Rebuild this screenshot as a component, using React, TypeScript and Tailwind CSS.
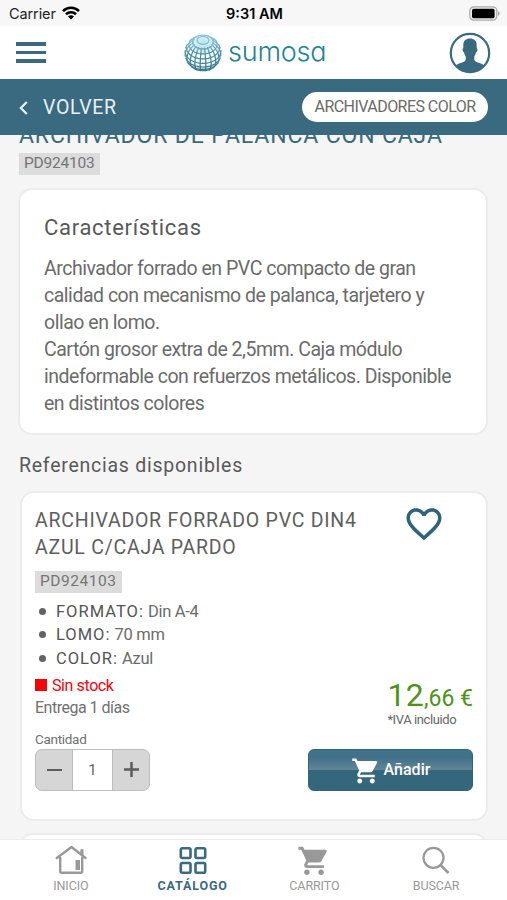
import type { ReactNode } from "react";
import { MdFavoriteBorder, MdShoppingCart } from "react-icons/md";

type NavItemProps = {
  active?: boolean;
  children: ReactNode;
  label: string;
};

const specs = [
  { name: "FORMATO:", value: "Din A-4" },
  { name: "LOMO:", value: "70 mm" },
  { name: "COLOR:", value: "Azul" },
];

const RADIUS = 18;
const TILT = (42 * Math.PI) / 180;

// Orthographic projection of a point on the tilted globe
function project(lat: number, lon: number) {
  const x = Math.cos(lat) * Math.sin(lon);
  const y = Math.sin(lat);
  const z = Math.cos(lat) * Math.cos(lon);

  return {
    x: 19 + RADIUS * x,
    y: 19 - RADIUS * (y * Math.cos(TILT) - z * Math.sin(TILT)),
    visible: y * Math.sin(TILT) + z * Math.cos(TILT) > 0,
  };
}

function linePath(points: { x: number; y: number; visible: boolean }[]) {
  let drawing = false;

  return points
    .map((point) => {
      if (!point.visible) {
        drawing = false;
        return "";
      }
      const command = drawing ? "L" : "M";
      drawing = true;
      return `${command}${point.x.toFixed(2)} ${point.y.toFixed(2)}`;
    })
    .join("");
}

const steps = Array.from({ length: 61 }, (_, i) => i / 60);
const parallels = [-38, -24, -9, 7, 23, 39, 55, 71].map((deg) =>
  linePath(steps.map((t) => project((deg * Math.PI) / 180, t * 2 * Math.PI - Math.PI))),
);
const meridians = Array.from({ length: 20 }, (_, i) => ((i + 0.5) * 2 * Math.PI) / 20).map((lon) =>
  linePath(steps.map((t) => project(-Math.PI / 2 + t * 2.6, lon))),
);

function Globe() {
  return (
    <svg className="h-[38px] w-[38px]" viewBox="0 0 38 38" fill="none">
      <defs>
        <linearGradient id="globe-line" x1="0" y1="0" x2="0" y2="38" gradientUnits="userSpaceOnUse">
          <stop offset="0" stopColor="#8cc9dc" />
          <stop offset="0.3" stopColor="#74b3c6" />
          <stop offset="0.5" stopColor="#4a8ea2" />
          <stop offset="1" stopColor="#2c7485" />
        </linearGradient>
        <radialGradient id="globe-fill" cx="0.5" cy="0.25" r="0.78">
          <stop offset="0" stopColor="#b9e4f1" />
          <stop offset="0.3" stopColor="#d5eef6" />
          <stop offset="0.45" stopColor="#fbfdfe" />
          <stop offset="0.75" stopColor="#f4fafb" />
          <stop offset="1" stopColor="#8fbfca" />
        </radialGradient>
      </defs>
      <circle cx="19" cy="19" r="18" fill="url(#globe-fill)" />
      <g stroke="url(#globe-line)" strokeWidth="1.2">
        {[...parallels, ...meridians].map((d, i) => (
          <path d={d} key={i} />
        ))}
      </g>
    </svg>
  );
}

function StatusBar() {
  return (
    <div className="grid h-[26px] shrink-0 grid-cols-3 items-center bg-[#f7f7f7] pt-px pr-[7px] pl-[9px] font-['Inter',sans-serif] text-black">
      <div className="flex items-center gap-[6px]">
        <span className="text-[14.5px] tracking-[-0.1px] text-[#222]">Carrier</span>
        <svg className="mb-px h-[14px] w-[18px]" viewBox="0 0 18 14" fill="none" stroke="#000" strokeWidth="2.6">
          <path d="M1 5.1a11.4 11.4 0 0 1 16 0" />
          <path d="M4 8.3a7.2 7.2 0 0 1 10 0" />
          <path d="M9 13.6 6 10.6a4.3 4.3 0 0 1 6 0Z" fill="#000" stroke="none" />
        </svg>
      </div>
      <span className="text-center text-[14.5px] font-semibold">9:31 AM</span>
      <svg className="mb-px h-[15px] w-[31px] justify-self-end" viewBox="0 0 31 15">
        <rect x="0.8" y="0.8" width="27" height="13.4" rx="4" fill="#eee" stroke="#aaa" strokeWidth="1.2" />
        <rect x="3" y="2.8" width="22.6" height="9.4" rx="1.8" />
        <path d="M29 5v5q1.6-.8 1.6-2.5T29 5Z" fill="#aaa" />
      </svg>
    </div>
  );
}

function Header() {
  return (
    <header className="flex h-[53px] shrink-0 items-center justify-between bg-white px-[16px]">
      <button aria-label="Menú" className="flex w-[30px] flex-col gap-[5px]" type="button">
        <span className="h-[3.4px] bg-[#3a6a80]" />
        <span className="h-[3.4px] bg-[#3a6a80]" />
        <span className="h-[3.4px] bg-[#3a6a80]" />
      </button>
      <div className="ml-[15px] flex items-center gap-[6px]">
        <Globe />
        <span className="w-[98px] pb-[2px] font-['Inter',sans-serif] text-[27px] leading-none font-light tracking-[-0.2px] text-[#1f8495] [font-feature-settings:'cv11']">
          sumosa
        </span>
      </div>
      <svg className="h-[42px] w-[42px]" viewBox="0 0 42 42">
        <circle cx="21" cy="21" r="19.2" fill="#fff" stroke="#3a6a80" strokeWidth="2.2" />
        <path
          d="M21 6.600c4.200 0 6.700 2.300 6.700 6.600v3c.8.100.9 1 .6 2.200-.3 1.200-.7 1.800-1.300 1.900-.4 2.100-1.100 3.300-1.700 4.200v3.200c.6 1.800 2.700 2.500 5.300 3.400 1.900.7 3.200 1.300 4.600 2.600A19 19 0 0 1 21 40 19 19 0 0 1 6.800 33.700c1.400-1.300 2.700-1.900 4.600-2.600 2.600-.9 4.700-1.600 5.300-3.400v-3.200c-.6-.9-1.300-2.100-1.700-4.200-.6-.1-1-.7-1.300-1.900-.3-1.200-.2-2.100.6-2.200v-3C14.300 8.900 16.800 6.600 21 6.600Z"
          fill="#3a6a80"
        />
      </svg>
    </header>
  );
}

function CodeBadge({ children }: { children: ReactNode }) {
  return (
    <span className="inline-flex h-[22px] items-center bg-[#dcdcdc] px-[5px] text-[15.5px] text-[#757575]">
      {children}
    </span>
  );
}

function ProductCard() {
  return (
    <section className="mt-[11px] ml-px h-[330px] rounded-[14px] border-2 border-[#ececec] bg-white px-[13px] pt-[14px]">
      <div className="flex items-start justify-between">
        <h3 className="w-[330px] text-[19.5px] leading-[27px] tracking-[0.76px] whitespace-nowrap text-[#5e5e5e]">
          ARCHIVADOR FORRADO PVC DIN4
          <br />
          AZUL C/CAJA PARDO
        </h3>
        <MdFavoriteBorder className="-mt-[4px] mr-[28px] size-[42px] text-[#2f637b]" />
      </div>
      <div className="mt-[10px] flex">
        <CodeBadge>
          <span className="tracking-[0.55px]">PD924103</span>
        </CodeBadge>
      </div>
      <ul className="mt-[7px] text-[16.5px] leading-[23.300px] text-[#6b6b6b]">
        {specs.map((spec) => (
          <li className="flex items-center" key={spec.name}>
            <span className="mr-[10px] ml-[4px] size-[7px] rounded-full bg-[#636363]" />
            <span className="mr-[4px] tracking-[1px] text-[#555]">{spec.name}</span>
            <span className="tracking-[-0.3px]">{spec.value}</span>
          </li>
        ))}
      </ul>
      <div className="flex items-start justify-between">
        <div className="pt-[5px] text-[16px] leading-[22px] tracking-[-0.4px]">
          <p className="flex items-center gap-[5px] text-[#fb0007]">
            <span className="mb-[2px] size-[12px] bg-[#fb0007]" />
            Sin stock
          </p>
          <p className="text-[16px] tracking-[-0.5px] text-[#707070]">Entrega 1 días</p>
        </div>
        <div className="h-[60px] pt-[9px]">
          <p className="text-[23px] leading-[32px] whitespace-nowrap text-[#4f941a]">
            <span className="text-[32px] tracking-[0.3px]">12</span>,66 €
          </p>
          <p className="-mt-[2px] text-[13px] leading-[14px] tracking-[-0.4px] text-[#666]">*IVA incluido</p>
        </div>
      </div>
      <div className="flex items-end justify-between">
        <div>
          <p className="text-[13.5px] leading-[19px] tracking-[-0.3px] text-[#707070]">Cantidad</p>
          <div className="flex h-[42px] w-[115px] overflow-hidden rounded-[7px] border border-[#bdbdbd] bg-[#d6d6d6]">
            <button aria-label="Quitar" className="flex w-[36px] items-center justify-center" type="button">
              <span className="h-[2.500px] w-[15px] bg-[#5c5c5c]" />
            </button>
            <span className="flex flex-1 items-center justify-center border-x border-[#bdbdbd] bg-white text-[15px] text-[#666]">
              1
            </span>
            <button aria-label="Sumar" className="flex w-[36px] items-center justify-center" type="button">
              <svg className="size-[15px]" viewBox="0 0 15 15" stroke="#5c5c5c" strokeWidth="2.500">
                <path d="M0 7.500h15M7.500 0v15" />
              </svg>
            </button>
          </div>
        </div>
        <button
          className="flex h-[42px] w-[165px] items-center justify-center gap-[3px] rounded-[6px] border border-[#316379] bg-[linear-gradient(#42718a_0%,#42718a_20%,#5f8598_49%,#34667c_50%,#34667c_100%)] text-[16px] font-medium text-white"
          type="button"
        >
          <MdShoppingCart className="mt-[2px] size-[30px]" />
          Añadir
        </button>
      </div>
    </section>
  );
}

function NavItem({ active, children, label }: NavItemProps) {
  return (
    <button
      className={
        active
          ? "flex flex-1 flex-col items-center pt-[5px] text-[12.500px] font-bold tracking-[0.85px] text-[#3a6a80]"
          : "flex flex-1 flex-col items-center pt-[5px] text-[12.500px] tracking-[-0.1px] text-[#999]"
      }
      type="button"
    >
      {children}
      <span className="mt-[2px] leading-[14px]">{label}</span>
    </button>
  );
}

function BottomNav() {
  return (
    <nav className="flex h-[61px] shrink-0 border-t border-[#ececec] bg-white px-[10px]">
      <NavItem label="INICIO">
        <svg className="size-[32px]" viewBox="0 0 32 32" fill="none" stroke="currentColor" strokeWidth="2.400">
          <path d="M1.800 13 16.500 2l14 11" strokeLinejoin="round" strokeLinecap="round" />
          <path d="M5.200 12v14.300q0 1.500 1.500 1.500h19q1.500 0 1.500-1.500V12" />
          <path d="M25.300 4.200h3.200v6.800l-3.200-2.500Z" fill="currentColor" stroke="none" />
          <path d="M20.500 15h4.500v10h-4.500Z" fill="currentColor" stroke="none" />
        </svg>
      </NavItem>
      <NavItem active label="CATÁLOGO">
        <svg className="size-[32px]" viewBox="0 0 32 32" fill="none" stroke="currentColor" strokeWidth="2.600">
          <rect x="3.800" y="3.300" width="9.700" height="9.700" rx="1.500" />
          <rect x="18.500" y="3.300" width="9.700" height="9.700" rx="1.500" />
          <rect x="3.800" y="18" width="9.700" height="9.700" rx="1.500" />
          <rect x="18.500" y="18" width="9.700" height="9.700" rx="1.500" />
        </svg>
      </NavItem>
      <NavItem label="CARRITO">
        <MdShoppingCart className="-mt-[1px] mb-[-1px] size-[34px]" />
      </NavItem>
      <NavItem label="BUSCAR">
        <svg className="size-[32px]" viewBox="0 0 32 32" fill="none" stroke="currentColor" strokeWidth="2.200">
          <circle cx="13.500" cy="12.800" r="10" />
          <path d="m20.500 20 8 8" strokeWidth="2.600" />
        </svg>
      </NavItem>
    </nav>
  );
}

export default function App() {
  return (
    <div className="flex h-[900px] w-[507px] flex-col overflow-hidden bg-[#f5f5f5] font-['Roboto',sans-serif]">
      <StatusBar />
      <Header />
      <div className="flex h-[56px] shrink-0 items-center justify-between bg-[#3a6a80] px-[19px]">
        <button className="flex items-center gap-[15px] pt-px text-[19.5px] tracking-[0.6px] text-[#e9f0f3]" type="button">
          <svg className="h-[14px] w-[9px]" viewBox="0 0 9 14" fill="none" stroke="currentColor" strokeWidth="2.200">
            <path d="M7.800 1 1.800 7l6 6" />
          </svg>
          VOLVER
        </button>
        <span className="flex h-[30px] w-[186px] items-center justify-center rounded-full bg-white text-[16px] tracking-[-0.55px] text-[#6a6a6a]">
          ARCHIVADORES COLOR
        </span>
      </div>
      <main className="min-h-0 flex-1 overflow-hidden px-[19px]">
        <h1 className="-mt-[13px] text-[23px] leading-[28px] tracking-[0.85px] whitespace-nowrap text-[#3a6a80]">
          ARCHIVADOR DE PALANCA CON CAJA
        </h1>
        <div className="mt-[3px] flex">
          <CodeBadge>
            <span className="tracking-[-0.2px]">PD924103</span>
          </CodeBadge>
        </div>
        <section className="mt-[13px] -ml-px h-[247px] rounded-[14px] border-2 border-[#ececec] bg-white px-[24px] pt-[23px]">
          <h2 className="text-[22px] leading-[30px] tracking-[0.7px] text-[#595959]">Características</h2>
          <p className="mt-[12px] text-[19.500px] leading-[27px] tracking-[-0.48px] whitespace-nowrap text-[#6b6b6b]">
            Archivador forrado en PVC compacto de gran
            <br />
            calidad con mecanismo de palanca, tarjetero y
            <br />
            ollao en lomo.
            <br />
            Cartón grosor extra de 2,5mm. Caja módulo
            <br />
            indeformable con refuerzos metálicos. Disponible
            <br />
            en distintos colores
          </p>
        </section>
        <h2 className="mt-[17px] text-[19.500px] leading-[28px] tracking-[0.75px] text-[#595959]">
          Referencias disponibles
        </h2>
        <ProductCard />
        <section className="mt-[12px] h-[330px] rounded-[14px] border-2 border-[#ececec] bg-white" />
      </main>
      <BottomNav />
    </div>
  );
}
